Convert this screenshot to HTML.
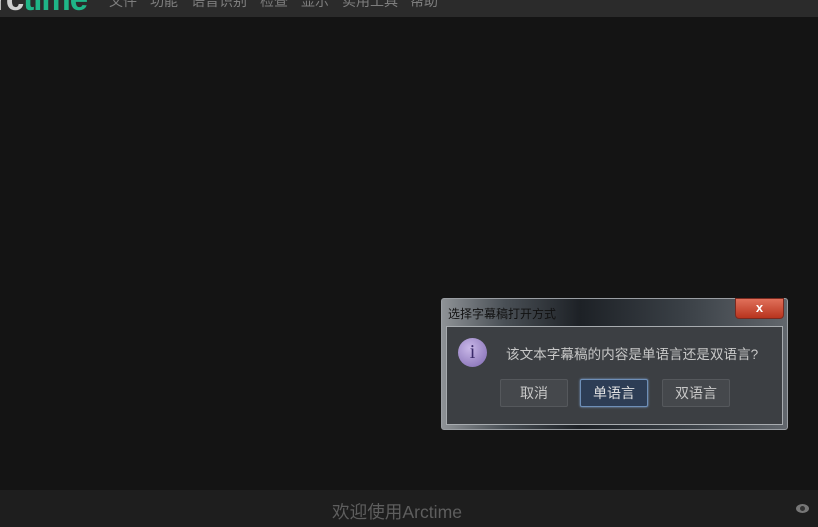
<!DOCTYPE html>
<html><head><meta charset="utf-8"><style>
body{margin:0;width:818px;height:527px;background:#141414;position:relative;overflow:hidden;font-family:"Liberation Sans","Noto Sans CJK SC",sans-serif}
.top{position:absolute;left:0;top:0;width:818px;height:17px;background:#2b2b2b;overflow:hidden}
.logo{position:absolute;left:-6px;top:-18px;font-size:33px;line-height:33px;font-weight:bold;letter-spacing:-1px}
.menu{position:absolute;top:-7px;font-size:14px;color:#7e7e7e;line-height:17px}
.bot{position:absolute;left:0;top:490px;width:818px;height:37px;background:#1e1e1e}
.dlg{position:absolute;left:441px;top:298px;width:345px;height:130px;border:1px solid #9a9ea3;border-radius:3px;background:linear-gradient(90deg,#8e9296 0,#4a5056 18%,#1d2126 40%,#3a4046 70%,#62676d 100%)}
.panel{position:absolute;left:4px;top:27px;width:335px;height:97px;border:1px solid #a8acb0;background:#3c3f43}
.btn{position:absolute;top:52px;height:26px;width:66px;border:1px solid #55585c;background:#45484c;color:#c8c8c8;font-size:14px;text-align:center;line-height:26px;border-radius:2px}
</style></head><body>
<div class="top">
<div class="logo"><span style="color:#cfcfcf">rc</span><span style="color:#1fb587">time</span></div>
<div class="menu" style="left:109px">文件</div>
<div class="menu" style="left:150px">功能</div>
<div class="menu" style="left:191px">语音识别</div>
<div class="menu" style="left:260px">检查</div>
<div class="menu" style="left:301px">显示</div>
<div class="menu" style="left:342px">实用工具</div>
<div class="menu" style="left:410px">帮助</div>
</div>
<div class="bot">
<div style="position:absolute;left:332px;top:9px;font-size:17.6px;color:#5e5e5e">欢迎使用Arctime</div>
<div style="position:absolute;left:796px;top:14px;width:13px;height:9px;border-radius:50%;background:#777"></div>
<div style="position:absolute;left:800px;top:16px;width:5px;height:5px;border-radius:50%;background:#333"></div>
</div>
<div class="dlg">
<div style="position:absolute;left:6px;top:6px;font-size:12px;color:#111">选择字幕稿打开方式</div>
<div style="position:absolute;left:293px;top:-1px;width:47px;height:19px;border:1px solid #7a2a20;border-radius:0 0 4px 4px;background:linear-gradient(#e0705a,#b8341e);color:#fff;font-weight:bold;font-size:13px;text-align:center;line-height:18px">x</div>
<div class="panel">
<div style="position:absolute;left:11px;top:11px;width:29px;height:29px;border-radius:50%;background:radial-gradient(circle at 40% 35%,#c9b8e8,#7e68b0);color:#3a2a6a;font-size:20px;text-align:center;line-height:29px;font-family:'Liberation Serif',serif">i</div>
<div style="position:absolute;left:59px;top:16px;font-size:13.6px;color:#c8c8c8">该文本字幕稿的内容是单语言还是双语言?</div>
<div class="btn" style="left:53px">取消</div>
<div class="btn" style="left:133px;border-color:#6e8fb8;background:#2d3d55;color:#e0e0e0;box-shadow:0 0 2px #7ea0cc">单语言</div>
<div class="btn" style="left:215px">双语言</div>
</div>
</div>
</body></html>
